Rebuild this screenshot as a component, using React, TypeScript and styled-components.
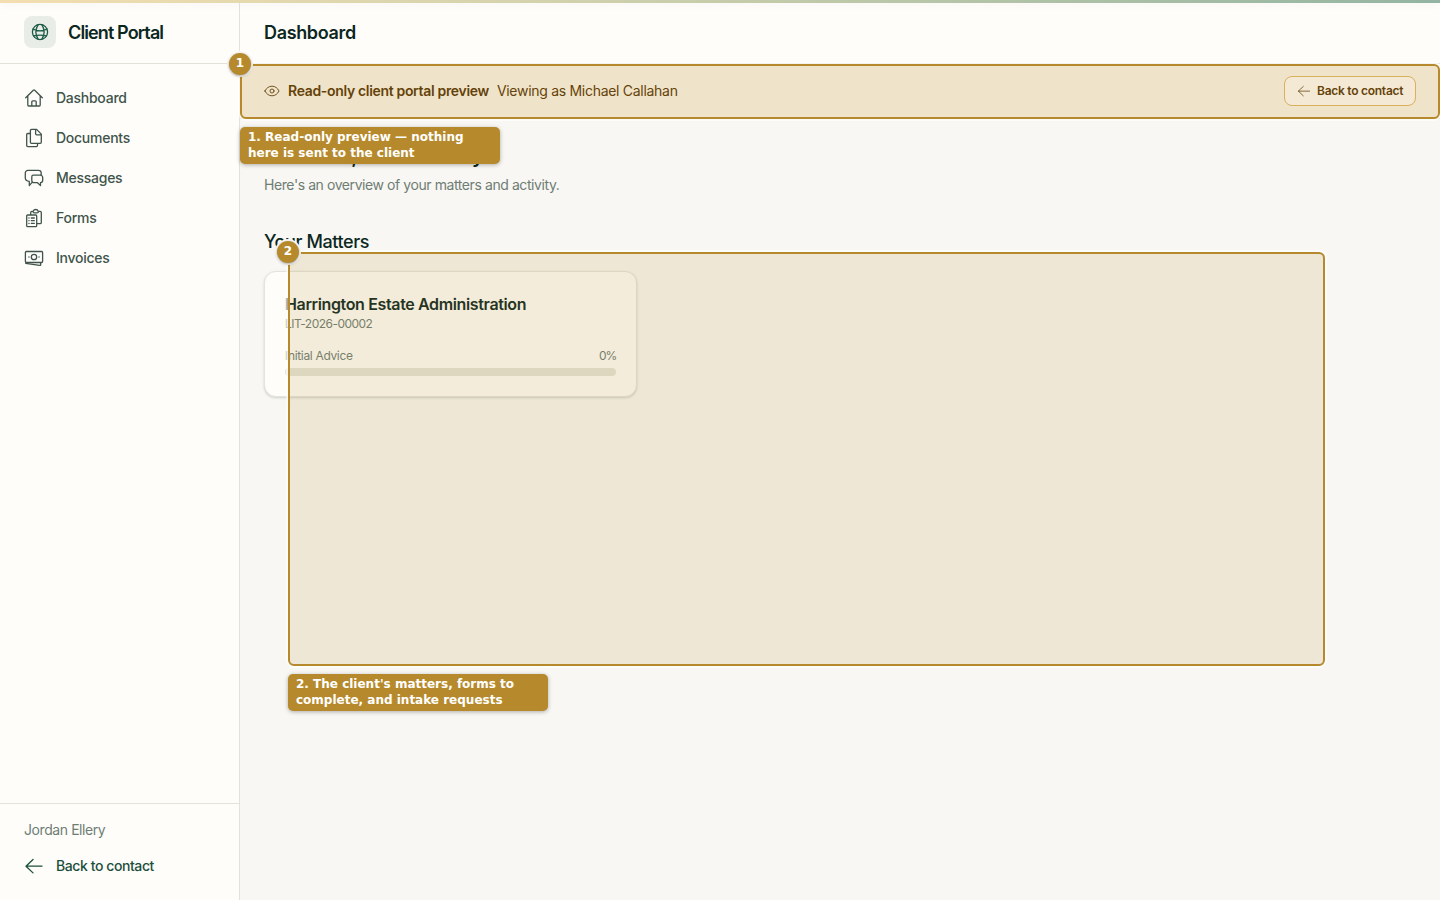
import React from "react";
import styled, { createGlobalStyle } from "styled-components";

const Global = createGlobalStyle`
  *, *::before, *::after { box-sizing: border-box; }
  body { margin: 0; background: #f8f7f3; font-family: Inter, sans-serif; font-size: 14px; line-height: 20px; color: #0c271e; overflow: hidden; }
  h1, h2, h3, p { margin: 0; }
`;

const Shell = styled.div`
  position: relative;
  display: flex;
  height: 900px;
`;

const TopStrip = styled.div`
  position: absolute;
  inset: 0 0 auto 0;
  height: 3px;
  background: linear-gradient(90deg, #f3deb0 0%, #d5d3ad 35%, #93b4a2 100%);
  box-shadow: 0 1px 8px rgba(12, 39, 30, 0.06);
`;

const Sidebar = styled.aside`
  display: flex;
  flex-direction: column;
  width: 240px;
  flex: none;
  background: #fefdfa;
  border-right: 1px solid #e3e3da;
`;

const Brand = styled.div`
  display: flex;
  align-items: center;
  gap: 12px;
  height: 64px;
  padding: 0 24px;
  border-bottom: 1px solid #e3e3da;
`;

const BrandMark = styled.div`
  display: grid;
  place-items: center;
  width: 32px;
  height: 32px;
  border-radius: 8px;
  background: #e8ede7;
  color: #1b5a43;
`;

const Text = styled.span<{ $size?: number; $weight?: number; $track?: number; $color?: string }>`
  font-size: ${(p) => p.$size ?? 14}px;
  font-weight: ${(p) => p.$weight ?? 400};
  letter-spacing: ${(p) => p.$track ?? 0}px;
  color: ${(p) => p.$color ?? "inherit"};
  white-space: nowrap;
`;

const BarTitle = styled(Text)`
  padding-top: 2px;
`;

const Nav = styled.nav`
  display: flex;
  flex-direction: column;
  gap: 4px;
  flex: 1;
  padding: 16px 12px;
`;

const NavItem = styled.a`
  display: flex;
  align-items: center;
  gap: 12px;
  height: 36px;
  padding: 0 12px;
  color: #40544b;
`;

const SidebarFooter = styled.div`
  display: flex;
  flex-direction: column;
  gap: 16px;
  height: 97px;
  padding: 16px 24px;
  border-top: 1px solid #e3e3da;
`;

const FooterLink = styled.a`
  display: flex;
  align-items: center;
  gap: 12px;
  color: #1b4f3c;
`;

const Page = styled.div`
  flex: 1;
  min-width: 0;
`;

const Header = styled.header`
  display: flex;
  align-items: center;
  height: 64px;
  padding: 0 24px;
  background: #fefdfa;
  border-bottom: 1px solid #e3e3da;
`;

const Banner = styled.div`
  display: flex;
  align-items: center;
  gap: 8px;
  height: 55px;
  padding: 0 24px;
  background: #faf3e6;
  color: #573604;
  border-bottom: 1px solid #f0dcae;
`;

const BackButton = styled.button`
  display: flex;
  align-items: center;
  gap: 6px;
  width: 132px;
  height: 30px;
  margin-left: auto;
  padding: 0 12px;
  font: inherit;
  color: inherit;
  background: #fefaf3;
  border: 1px solid #e0b768;
  border-radius: 8px;
`;

const Main = styled.main`
  padding: 24px;
`;

const Greeting = styled.h1`
  height: 28px;
  margin-bottom: 4px;
  font-size: 20px;
  line-height: 26px;
  font-weight: 600;
  letter-spacing: -0.4px;
`;

const SectionTitle = styled.h2`
  height: 28px;
  margin: 32px 0 16px;
  font-size: 18px;
  line-height: 29px;
  font-weight: 500;
  letter-spacing: -0.4px;
`;

const Grid = styled.div`
  display: grid;
  grid-template-columns: repeat(3, 1fr);
  gap: 16px;
`;

const Card = styled.article`
  padding: 20px;
  background: #fefdfa;
  border: 1px solid #e5e4dc;
  border-radius: 12px;
  box-shadow: 0 1px 3px rgba(12, 39, 30, 0.1), 0 1px 2px rgba(12, 39, 30, 0.08);
`;

const CardTitle = styled.h3`
  font-size: 16px;
  line-height: 24px;
  font-weight: 600;
  letter-spacing: -0.36px;
`;

const CardCode = styled.p`
  font-size: 12px;
  line-height: 16px;
  letter-spacing: -0.53px;
  color: #6f7d75;
`;

const Progress = styled.div`
  display: flex;
  justify-content: space-between;
  margin: 16px 0 4px;
  font-size: 12px;
  line-height: 16px;
  color: #6f7d75;
`;

const Track = styled.div`
  height: 8px;
  border-radius: 4px;
  background: #e5e4d9;
`;

const Highlight = styled.div<{ $x: number; $y: number; $w: number; $h: number }>`
  position: absolute;
  left: ${(p) => p.$x}px;
  top: ${(p) => p.$y}px;
  width: ${(p) => p.$w}px;
  height: ${(p) => p.$h}px;
  border: 2px solid #b68a2c;
  border-radius: 6px;
  background: rgba(182, 138, 44, 0.145);
  box-shadow: 0 0 0 2px rgba(255, 255, 255, 0.6);
`;

const Pin = styled.div<{ $x: number; $y: number }>`
  position: absolute;
  left: ${(p) => p.$x - 11}px;
  top: ${(p) => p.$y - 11}px;
  width: 22px;
  height: 22px;
  border-radius: 50%;
  background: #b68a2c;
  color: #fff;
  font: bold 12px/20px "DejaVu Sans", sans-serif;
  text-align: center;
  box-shadow: 0 1px 3px rgba(0, 0, 0, 0.35), 0 0 0 2px #fbfaf6;
`;

const Callout = styled.div<{ $x: number; $y: number }>`
  position: absolute;
  left: ${(p) => p.$x}px;
  top: ${(p) => p.$y}px;
  width: 260px;
  padding: 3px 8px;
  border-radius: 5px;
  background: #b68a2c;
  color: #fff;
  font: bold 12px/15.6px "DejaVu Sans", sans-serif;
  box-shadow: 0 1px 4px rgba(0, 0, 0, 0.3);
`;

const Icon = ({ size = 20, stroke = 1.2, children }: { size?: number; stroke?: number; children: React.ReactNode }) => (
  <svg width={size} height={size} viewBox="0 0 20 20" fill="none" stroke="currentColor" strokeWidth={stroke}
    strokeLinecap="round" strokeLinejoin="round" style={{ flex: "none" }}>{children}</svg>
);

const ArrowPaths = () => <path d="M18 10.2H2M9 3.5L2 10.2l7 6.700" />;

const navItems = [
  { label: "Dashboard", icon: <path d="M1.7 9.8l7.6-7.6a1 1 0 0 1 1.4 0l7.6 7.6M3.8 8v9.1a.9.9 0 0 0 .9.9h10.6a.9.9 0 0 0 .9-.9V8M7.8 18v-4.2a1 1 0 0 1 1-1h2.4a1 1 0 0 1 1 1V18" /> },
  { label: "Documents", icon: <path d="M6.4 2.5a1.1 1.1 0 0 1 1.1-1.1h5.1l4.7 4.7v8.1a1.1 1.1 0 0 1-1.1 1.1H7.5a1.1 1.1 0 0 1-1.1-1.1zM11.6 1.5v4.3a1.1 1.1 0 0 0 1.1 1.1h4.5M13.5 15.5v2a1.1 1.1 0 0 1-1.1 1.1H3.8a1.1 1.1 0 0 1-1.1-1.1V6.6a1.1 1.1 0 0 1 1.1-1.1h2.5" /> },
  { label: "Messages", icon: <path d="M9.2 7.2h7.2a2.3 2.3 0 0 1 2.3 2.3v2.8a2.3 2.3 0 0 1-2.2 2.3v3l-3-2.9h-3.4a2.3 2.3 0 0 1-2.3-2.3V8.7a1.5 1.5 0 0 1 1.4-1.5zM7.8 14.7l-2.5 2.9v-4.2C2.7 13 1.3 12.2 1.3 10V5a2.7 2.7 0 0 1 2.7-2.7h10.5A2.7 2.7 0 0 1 17.2 5v2.2" /> },
  { label: "Forms", icon: <><path d="M2.7 8a1 1 0 0 1 1-1h8a1 1 0 0 1 1 1v9.7a1 1 0 0 1-1 1h-8a1 1 0 0 1-1-1zM6.700 7V4.600a1.200 1.200 0 0 1 1.200-1.200h1.300a2.600 2.600 0 0 1 5 0h1.900a1.200 1.200 0 0 1 1.200 1.200v9.900a1.200 1.200 0 0 1-1.200 1.200h-3.300M9 3.400c0 1.200.3 1.500 1.200 1.500h3c.9 0 1.200-.3 1.200-1.500" /><path d="M4.900 10h.1M4.900 12.700h.1M4.900 15.400h.1M7.300 10h3M7.300 12.700h3M7.300 15.400h3" /></> },
  { label: "Invoices", icon: <><rect x="1.4" y="3.5" width="17.2" height="11" rx="1" /><circle cx="10" cy="9" r="2.7" /><path d="M4.9 9h.1M15 9h.1M1.7 15.3l14 2.1c.7.1 1-.3 1-1v-1.700" /></> },
];

export default function App() {
  return (
    <Shell>
      <Global />
      <Sidebar>
        <Brand>
          <BrandMark>
            <Icon stroke={1.3}>
              <circle cx="10" cy="10" r="7.6" />
              <path d="M8.2 2.7C5.3 7.200 5.300 12.800 8.200 17.300M11.800 2.700c2.900 4.500 2.900 10.100 0 14.600M3 7c2 1.200 4.300 1.800 7 1.800S15 8.200 17 7M3.500 13.900c4.200-1 8.800-1 13 0" />
            </Icon>
          </BrandMark>
          <BarTitle $size={18} $weight={600} $track={-0.88}>Client Portal</BarTitle>
        </Brand>
        <Nav>
          {navItems.map((n) => (
            <NavItem key={n.label}>
              <Icon stroke={1.3}>{n.icon}</Icon>
              <Text $weight={500} $track={-0.26}>{n.label}</Text>
            </NavItem>
          ))}
        </Nav>
        <SidebarFooter>
          <Text $color="#6f7d75" $track={-0.42}>Jordan Ellery</Text>
          <FooterLink>
            <Icon stroke={1.3}><ArrowPaths /></Icon>
            <Text $weight={500} $track={-0.42}>Back to contact</Text>
          </FooterLink>
        </SidebarFooter>
      </Sidebar>
      <Page>
        <Header><BarTitle as="h1" $size={18} $weight={600} $track={-0.35}>Dashboard</BarTitle></Header>
        <Banner>
          <Icon size={16} stroke={1.1}>
            <path d="M1.200 10C3 6.300 6.200 4 10 4s7 2.300 8.800 6c-1.800 3.700-5 6-8.800 6s-7-2.300-8.800-6z" />
            <circle cx="10" cy="10" r="2.5" />
          </Icon>
          <Text $weight={600} $track={-0.33}>Read-only client portal preview</Text>
          <Text $track={-0.29}>Viewing as Michael Callahan</Text>
          <BackButton>
            <Icon size={14} stroke={1.1}><ArrowPaths /></Icon>
            <Text $size={12} $weight={600} $track={-0.26}>Back to contact</Text>
          </BackButton>
        </Banner>
        <Main>
          <Greeting>Welcome, Jordan Ellery</Greeting>
          <Text as="p" $track={-0.42} $color="#6f7d75">Here's an overview of your matters and activity.</Text>
          <SectionTitle>Your Matters</SectionTitle>
          <Grid>
            <Card>
              <CardTitle>Harrington Estate Administration</CardTitle>
              <CardCode>LIT-2026-00002</CardCode>
              <Progress>
                <Text $size={12} $track={-0.33}>Initial Advice</Text>
                <Text $size={12} $track={-1}>0%</Text>
              </Progress>
              <Track />
            </Card>
          </Grid>
        </Main>
      </Page>
      <TopStrip />
      <Highlight $x={240} $y={64} $w={1200} $h={55} />
      <Highlight $x={288} $y={252} $w={1037} $h={414} />
      <Callout $x={240} $y={127}>1. Read-only preview — nothing here is sent to the client</Callout>
      <Callout $x={288} $y={674}>2. The client's matters, forms to complete, and intake requests</Callout>
      <Pin $x={240} $y={64}>1</Pin>
      <Pin $x={288} $y={252}>2</Pin>
    </Shell>
  );
}
